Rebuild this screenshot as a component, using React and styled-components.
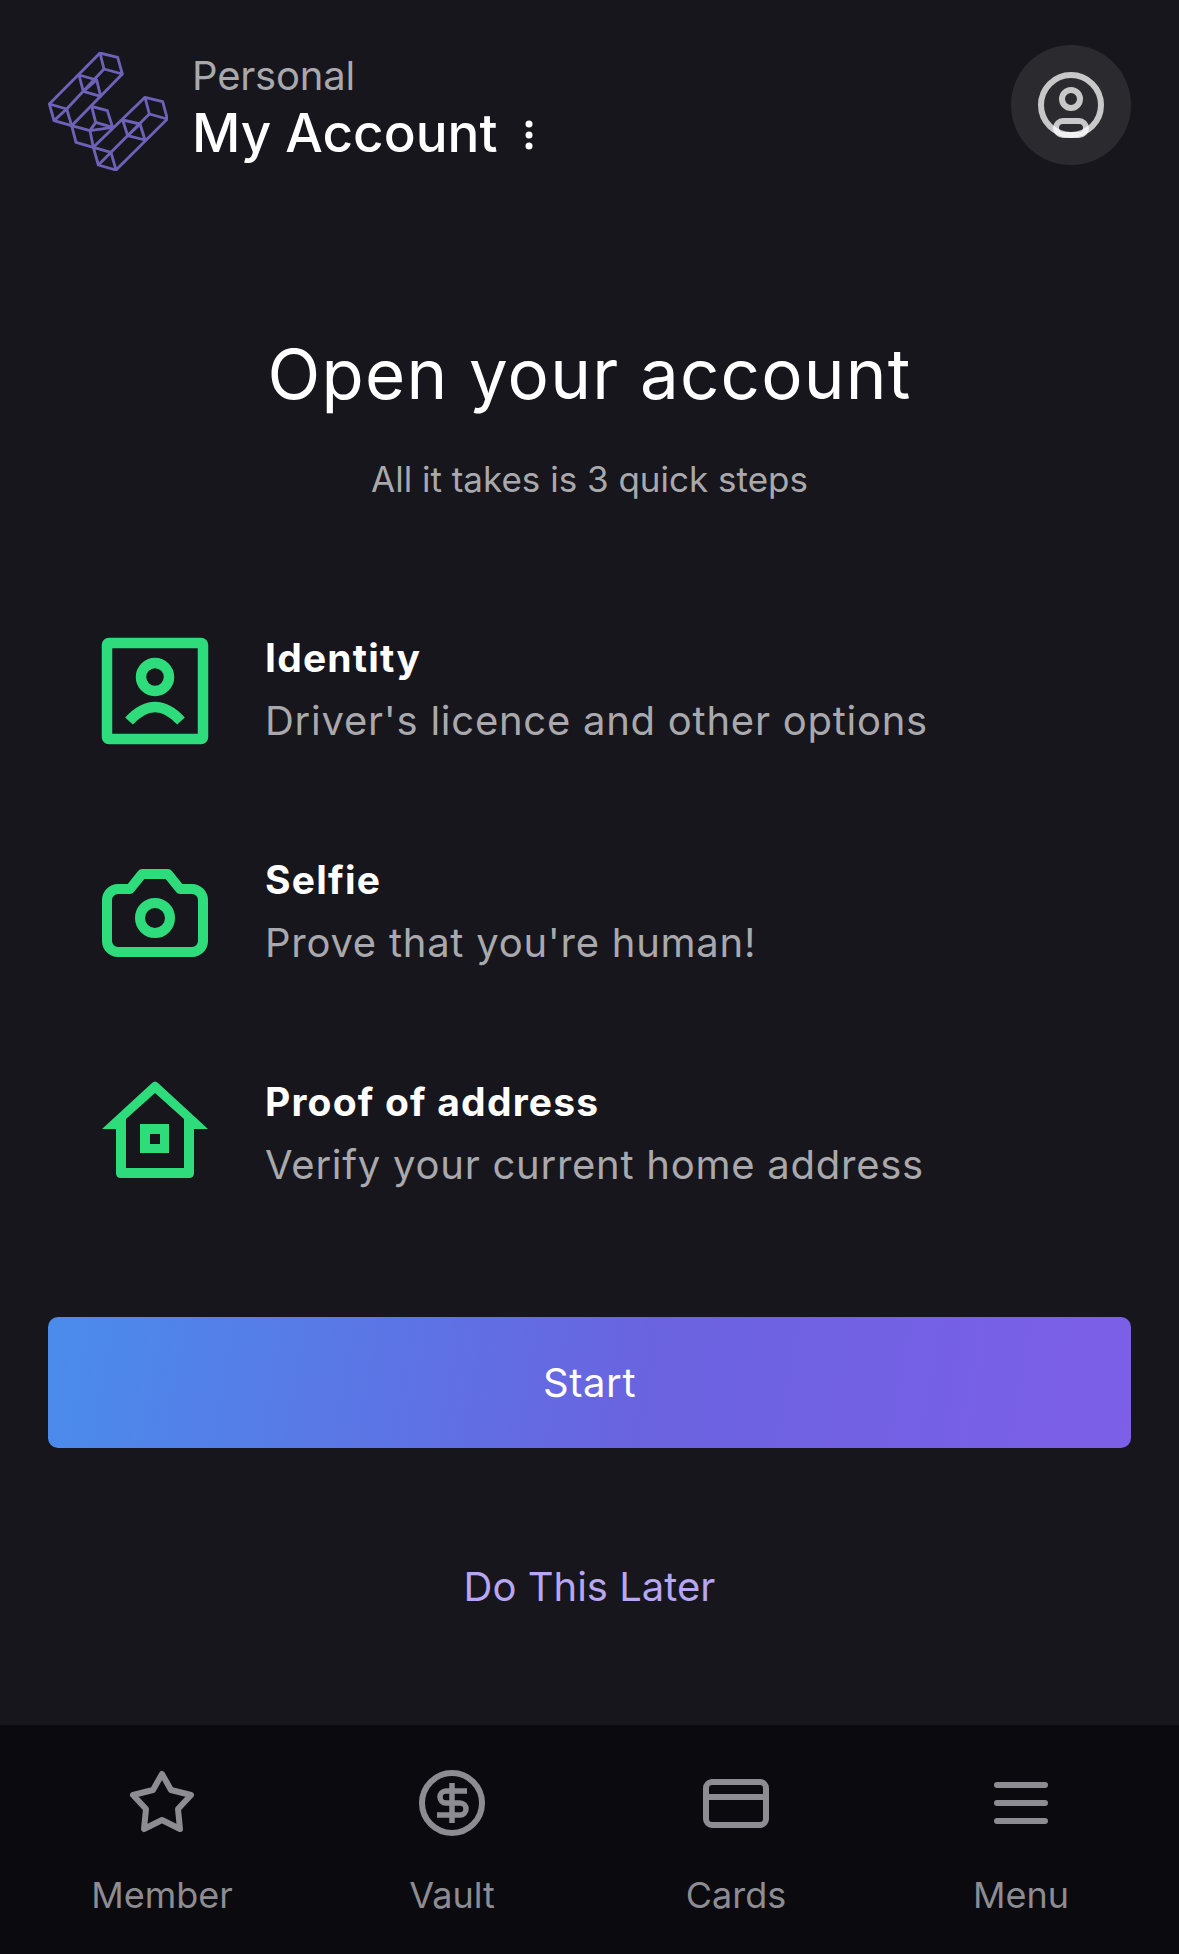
import React from 'react';
import styled, { createGlobalStyle } from 'styled-components';

const GlobalStyle = createGlobalStyle`
  html, body {
    margin: 0;
    padding: 0;
    background: #16161c;
  }
  * {
    box-sizing: border-box;
  }
`;

const Page = styled.div`
  width: 1179px;
  height: 1954px;
  display: flex;
  flex-direction: column;
  background: #16161c;
  font-family: Inter, 'Noto Sans', sans-serif;
  color: #fff;
  overflow: hidden;
`;

const Main = styled.main`
  flex: 1;
  display: flex;
  flex-direction: column;
  padding: 45px 48px 0;
`;

const Header = styled.header`
  display: flex;
  align-items: flex-start;
`;

const Logo = styled.svg`
  width: 120px;
  height: 119px;
  margin-top: 7px;
  flex: none;
`;

const AccountInfo = styled.div`
  display: flex;
  flex-direction: column;
  margin: 9px 0 0 24px;
`;

const AccountType = styled.div`
  font-size: 40px;
  line-height: 44px;
  color: #a9a9ad;
  letter-spacing: -0.2px;
`;

const AccountName = styled.div`
  display: flex;
  align-items: center;
  gap: 26px;
  margin-top: 4px;
  font-size: 53px;
  line-height: 62px;
  font-weight: 500;
`;

const Dots = styled.svg`
  width: 10px;
  height: 32px;
  margin-top: 3px;
`;

const Avatar = styled.div`
  width: 120px;
  height: 120px;
  margin-left: auto;
  border-radius: 50%;
  background: #2b2b2f;
  display: flex;
  align-items: center;
  justify-content: center;
`;

const Title = styled.h1`
  margin: 163px 0 0;
  text-align: center;
  font-size: 69px;
  line-height: 80px;
  font-weight: 400;
  letter-spacing: 1.2px;
`;

const Subtitle = styled.p`
  margin: 45px 0 0;
  text-align: center;
  font-size: 35px;
  line-height: 40px;
  color: #a9a9ad;
`;

const Steps = styled.div`
  display: flex;
  flex-direction: column;
  gap: 112px;
  margin-top: 135px;
  padding-left: 52px;
`;

const Step = styled.div`
  display: flex;
  align-items: center;
  gap: 55px;
  height: 110px;
`;

const StepIcon = styled.svg`
  width: 110px;
  height: 110px;
  flex: none;
  margin-top: ${(props) => props.$nudge}px;
  color: #2fdc7b;
`;

const StepText = styled.div`
  display: flex;
  flex-direction: column;
  gap: 19px;
`;

const StepTitle = styled.div`
  font-size: 39px;
  line-height: 44px;
  font-weight: 700;
  letter-spacing: 1.2px;
`;

const StepDesc = styled.div`
  font-size: 40px;
  line-height: 44px;
  letter-spacing: 0.75px;
  color: #a9a9ad;
`;

const StartButton = styled.button`
  height: 131px;
  margin-top: 129px;
  border: none;
  border-radius: 10px;
  background: linear-gradient(100deg, #4a8cec 0%, #6a63e0 55%, #7d5fe8 100%);
  color: #fff;
  font-family: inherit;
  font-size: 40px;
  letter-spacing: 0.6px;
`;

const LaterLink = styled.a`
  margin-top: 115px;
  text-align: center;
  font-size: 40px;
  line-height: 48px;
  color: #b7a6f4;
`;

const Nav = styled.nav`
  height: 229px;
  flex: none;
  display: grid;
  grid-template-columns: 286px 294px 274px 296px;
  padding-left: 19px;
  background: #0a0a0f;
`;

const NavItem = styled.div`
  display: flex;
  flex-direction: column;
  align-items: center;
  color: #8c8c92;
`;

const NavIcon = styled.svg`
  width: 66px;
  height: 66px;
  margin-top: 45px;
`;

const NavLabel = styled.span`
  margin-top: 39px;
  font-size: 36px;
  line-height: 40px;
`;

const AvatarIcon = () => (
  <svg width="72" height="72" viewBox="-36 -36 72 72" fill="none" stroke="#fff" strokeOpacity="0.74" strokeWidth="6">
    <circle r="30" />
    <circle cy="-6" r="9" />
    <rect x="-15" y="16" width="30" height="14" rx="7" />
  </svg>
);

const Cube = ({ d }) => <path d={d} />;

const logoPaths = [
  'M210 37 L263 50 L277 100 L222 85 Z',
  'M58 190 L110 205 L125 255 L72 240 Z',
  'M210 37 L58 190',
  'M222 85 L110 205',
  'M277 100 L125 255',
  'M147 103 L200 118 L212 167 L160 152 Z',
  'M160 152 L200 118',
  'M72 240 L110 205',
  'M185 197 L232 210 L248 260 L197 245 Z',
  'M125 255 L138 305 L190 320',
  'M125 255 L180 270 L190 320',
  'M180 270 L197 245',
  'M180 270 L248 260',
  'M345 170 L398 183 L412 235 L358 220 Z',
  'M190 320 L243 335 L258 388 L205 373 Z',
  'M345 170 L190 320',
  'M358 220 L243 335',
  'M412 235 L258 388',
  'M278 238 L330 250 L345 298 L293 285 Z',
  'M293 285 L330 250',
  'M205 373 L243 335',
];

const steps = [
  {
    title: 'Identity',
    desc: "Driver's licence and other options",
    nudge: 3,
    icon: (
      <g fill="none" stroke="currentColor" strokeWidth="10.5">
        <rect x="7" y="7" width="96" height="96" rx="2" strokeLinejoin="round" />
        <circle cx="55" cy="41" r="14" />
        <path d="M29 85 Q55 57 81 85" />
      </g>
    ),
  },
  {
    title: 'Selfie',
    desc: "Prove that you're human!",
    nudge: 3,
    icon: (
      <g fill="none" stroke="currentColor" strokeWidth="10" strokeLinejoin="round">
        <path d="M30 31 L42 16 H68 L80 31 H92 a11 11 0 0 1 11 11 V83 a11 11 0 0 1 -11 11 H18 a11 11 0 0 1 -11 -11 V42 a11 11 0 0 1 11 -11 Z" />
        <circle cx="55" cy="60" r="15" />
      </g>
    ),
  },
  {
    title: 'Proof of address',
    desc: 'Verify your current home address',
    nudge: -6,
    icon: (
      <path
        fill="currentColor"
        fillRule="evenodd"
        d="M52 8 Q55 5 58 8 L108 54 H94 V98 Q94 103 89 103 H21 Q16 103 16 98 V54 H2 Z M55 18 L26 44 V93 H84 V44 Z M40 49 H69 V78 H40 Z M50 59 V69 H60 V59 Z"
      />
    ),
  },
];

const navItems = [
  {
    label: 'Member',
    icon: <path d="M33 4 L42 20 L62 25 L49 39 L51 59 L33 50 L15 59 L17 39 L4 25 L24 20 Z" />,
  },
  {
    label: 'Vault',
    icon: (
      <>
        <circle cx="33" cy="33" r="30" />
        <path d="M33 13 V53 M48 21 H27 a6 6 0 0 0 0 12 H41 a6 6 0 0 1 0 12 H18" strokeWidth="5.5" />
      </>
    ),
  },
  {
    label: 'Cards',
    icon: (
      <>
        <rect x="3" y="12" width="60" height="43" rx="6" />
        <path d="M3 27 H63" />
      </>
    ),
  },
  {
    label: 'Menu',
    icon: <path d="M9 15 H57 M9 33 H57 M9 51 H57" strokeLinecap="round" />,
  },
];

const App = () => {
  return (
    <Page>
      <GlobalStyle />
      <Main>
        <Header>
          <Logo viewBox="54 34 360 357" fill="none" stroke="#6e62b8" strokeWidth="8.5" strokeLinejoin="round">
            {logoPaths.map((d) => (
              <Cube key={d} d={d} />
            ))}
          </Logo>
          <AccountInfo>
            <AccountType>Personal</AccountType>
            <AccountName>
              My Account
              <Dots viewBox="0 0 10 32" fill="#fff">
                <circle cx="5" cy="5" r="3.5" />
                <circle cx="5" cy="16" r="3.5" />
                <circle cx="5" cy="27" r="3.5" />
              </Dots>
            </AccountName>
          </AccountInfo>
          <Avatar>
            <AvatarIcon />
          </Avatar>
        </Header>
        <Title>Open your account</Title>
        <Subtitle>All it takes is 3 quick steps</Subtitle>
        <Steps>
          {steps.map((step) => (
            <Step key={step.title}>
              <StepIcon viewBox="0 0 110 110" $nudge={step.nudge}>
                {step.icon}
              </StepIcon>
              <StepText>
                <StepTitle>{step.title}</StepTitle>
                <StepDesc>{step.desc}</StepDesc>
              </StepText>
            </Step>
          ))}
        </Steps>
        <StartButton>Start</StartButton>
        <LaterLink>Do This Later</LaterLink>
      </Main>
      <Nav>
        {navItems.map((item) => (
          <NavItem key={item.label}>
            <NavIcon viewBox="0 0 66 66" fill="none" stroke="currentColor" strokeWidth="6" strokeLinejoin="round">
              {item.icon}
            </NavIcon>
            <NavLabel>{item.label}</NavLabel>
          </NavItem>
        ))}
      </Nav>
    </Page>
  );
};

export default App;
